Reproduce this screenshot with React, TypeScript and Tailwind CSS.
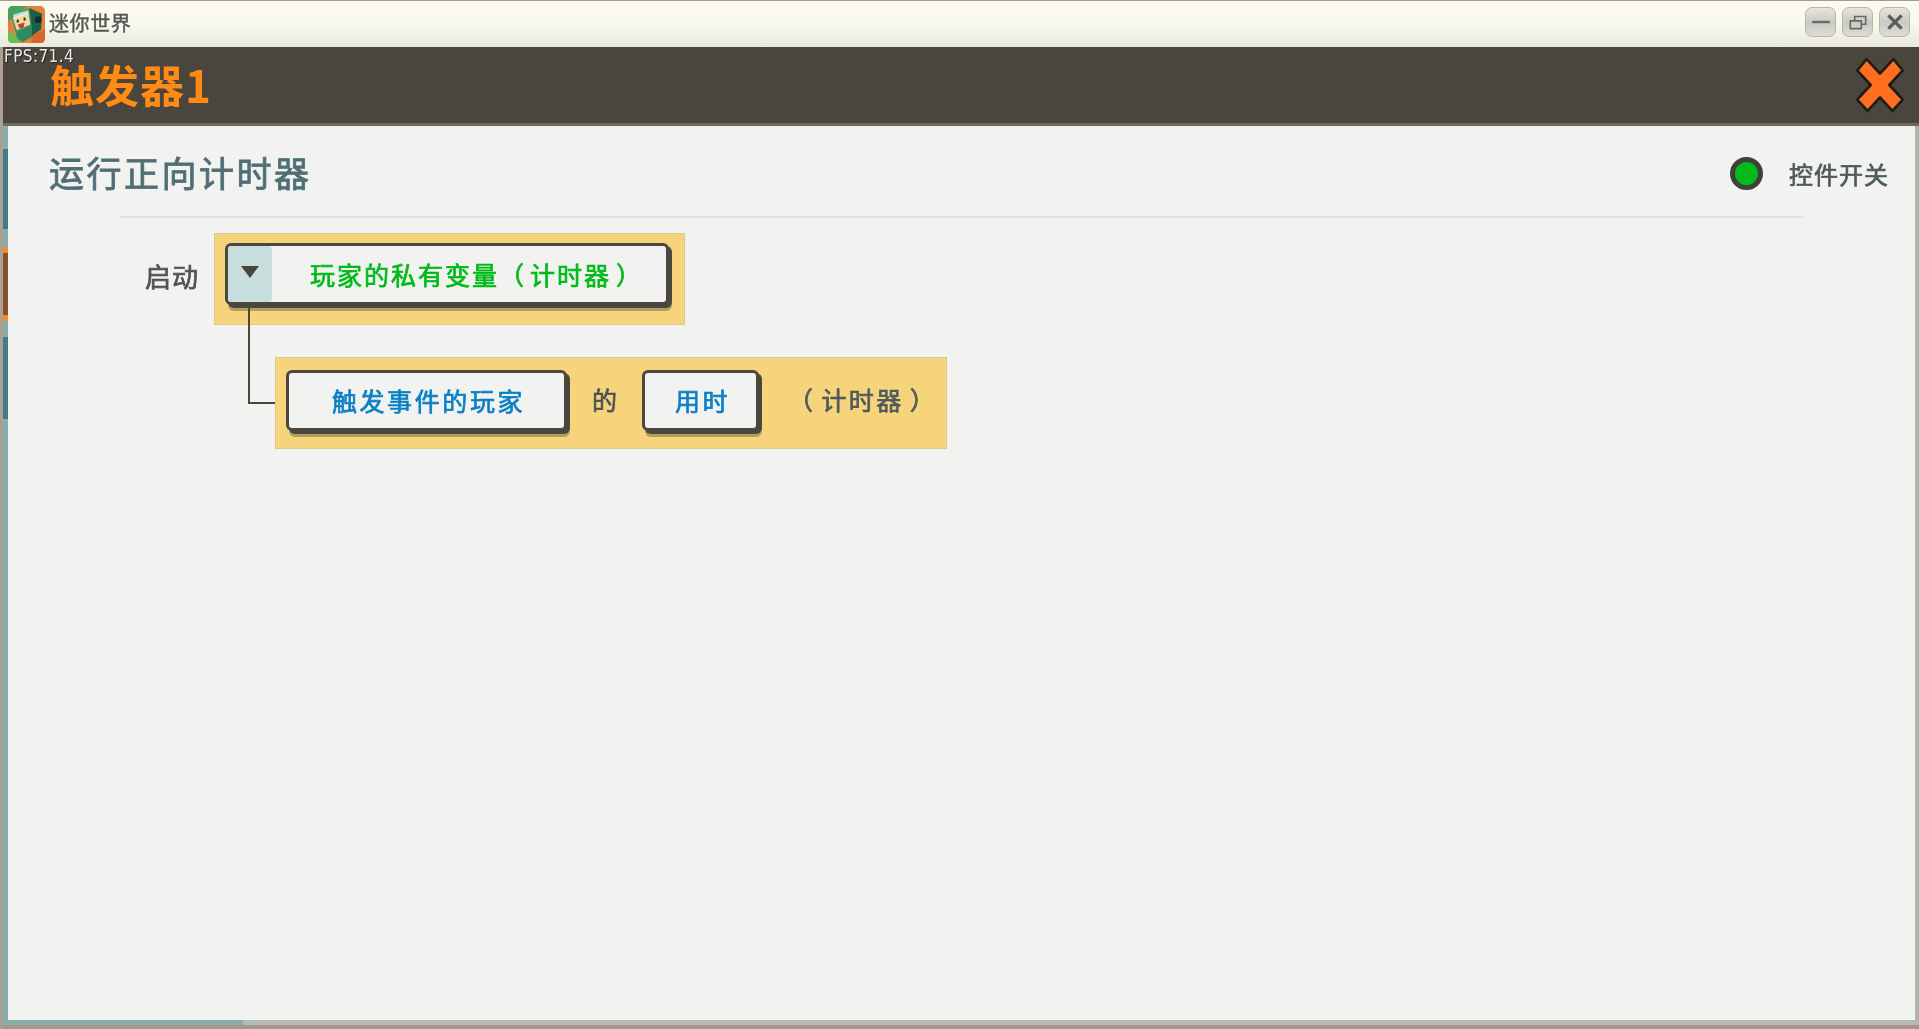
import { type ReactNode } from "react";

const cjk = "font-['Noto_Sans_CJK_SC','Noto_Sans',sans-serif]";

function GameLogo() {
  return (
    <svg viewBox="0 0 38 38" className="w-[37px] h-[37px] shrink-0">
      <rect x="0" y="0" width="38" height="38" rx="5" fill="#e5813a" />
      <path d="M0 5 Q0 0 5 0 H20 L0 16Z" fill="#49a05c" />
      <path d="M0 26 L14 32 L12 38 H4 Q0 38 0 33Z" fill="#6dbb54" />
      <path d="M24 30 L38 24 V33 Q38 38 33 38 H24Z" fill="#d9652c" />
      <path d="M3 9 L22 2 L24 20 L8 28Z" fill="#2f9a6c" />
      <path d="M22 2 L35 8 L34 24 L24 31 L24 20Z" fill="#186149" />
      <path d="M8 28 L24 20 L24 32 L15 37 L10 34Z" fill="#2b8a60" />
      <path d="M5 12 L21 7 L23 19 L9 25Z" fill="#f4d8a4" />
      <path d="M5 9 L21 4 L21 8 L6 13Z" fill="#ffffff" opacity="0.7" />
      <rect x="9" y="14" width="2" height="3" fill="#33241c" />
      <rect x="16" y="12" width="2" height="3" fill="#33241c" />
      <path d="M10 19 L17 17 L16 22 L12 23Z" fill="#b9452c" />
      <circle cx="31" cy="14" r="3.5" fill="#20282f" />
    </svg>
  );
}

function WindowButton({ children }: { children: ReactNode }) {
  return (
    <div className="w-[31px] h-[30px] rounded-[7px] border border-[#bcb5a6] bg-gradient-to-b from-[#e6e6de] via-[#c9cbc4] to-[#dcdcd2] flex items-center justify-center">
      <svg viewBox="0 0 20 20" className="w-[22px] h-[22px]" fill="none" stroke="#6a6a64">
        {children}
      </svg>
    </div>
  );
}

function Slot({
  text,
  color,
  className,
}: {
  text: string;
  color: string;
  className: string;
}) {
  return (
    <div
      className={`h-[61px] rounded-[6px] bg-[#f2f2f0] border-[3px] border-[#4b473f] shadow-[3px_3px_0_#4b473f,3px_6px_0_#b39c5c] flex items-center justify-center pl-[4px] text-[25px] tracking-[2.6px] [-webkit-text-stroke:0.7px] ${color} ${className}`}
    >
      {text}
    </div>
  );
}

export default function App() {
  return (
    <div className={`w-[1919px] h-[1029px] overflow-hidden flex flex-col bg-[#f2f2f0] blur-[0.4px] ${cjk}`}>
      {/* Window title bar */}
      <div className="h-[47px] shrink-0 border-t border-[#a89a8c] bg-gradient-to-b from-[#fafaf0] via-[#f8f8ec] to-[#e9e8dc] flex items-center pl-[8px] pr-[9px]">
        <GameLogo />
        <span className="ml-[4px] -mt-[3px] text-[20px] tracking-[0.6px] text-[#555553] [-webkit-text-stroke:0.4px]">迷你世界</span>
        <div className="ml-auto flex gap-[6px] -mt-[4px]">
          <WindowButton>
            <path d="M2 10 H18" strokeWidth="2.2" />
          </WindowButton>
          <WindowButton>
            <path d="M3 9 H13 V16 H3Z M7 9 V5 H17 V12 H13" strokeWidth="1.5" />
          </WindowButton>
          <WindowButton>
            <path d="M4 4 L16 16 M16 4 L4 16" strokeWidth="3" stroke="#5c5c58" />
          </WindowButton>
        </div>
      </div>

      <div className="flex-1 flex min-h-0 relative">
        {/* Left frame */}
        <div className="w-[3px] shrink-0 bg-[#ad9f92]" />

        <div className="flex-1 min-w-0 flex flex-col">
          {/* Header */}
          <div className="h-[79px] shrink-0 bg-[#4a463e] border-b-[3px] border-[#6b6860] flex items-center justify-between pl-[47px] pr-[15px]">
            <span className="-mt-[2px] text-[44px] font-bold leading-none tracking-[1px] text-[#ff8a14]">触发器1</span>
            <svg viewBox="0 0 46 54" className="w-[48px] h-[56px] mt-[-1px]">
              <path
                d="M10 2 L23 16 L36 2 L45 13 L32 27 L45 41 L35 52 L23 39 L11 52 L1 41 L14 27 L1 13Z"
                fill="#ff6d1f"
                stroke="#1f1c18"
                strokeWidth="2.5"
                strokeLinejoin="round"
              />
            </svg>
          </div>

          <div className="flex-1 min-h-0 flex">
            {/* Teal side rail */}
            <div className="w-[5px] shrink-0 bg-[#87aeac] flex flex-col">
              <div className="mt-[23px] h-[80px] bg-[#3f7b8b]" />
              <div className="mt-[18px] h-[6px] bg-[#f58a24]" />
              <div className="h-[62px] bg-[#85512c]" />
              <div className="h-[6px] bg-[#f58a24]" />
              <div className="mt-[16px] h-[82px] bg-[#3f7b8b]" />
            </div>

            {/* Content */}
            <div className="flex-1 min-w-0 flex flex-col">
              <div className="h-[92px] shrink-0 flex flex-col">
                <div className="flex-1 flex items-center justify-between pl-[41px] pr-[26px]">
                  <span className="mt-[3px] text-[35px] tracking-[2.5px] text-[#4f6f75] [-webkit-text-stroke:0.8px]">运行正向计时器</span>
                  <div className="mt-[5px] flex items-center gap-[26px]">
                    <div className="w-[33px] h-[33px] rounded-full bg-[#00bb18] border-[5px] border-[#3f3f3c]" />
                    <span className="text-[24px] tracking-[1px] text-[#4e5a5c] [-webkit-text-stroke:0.7px]">控件开关</span>
                  </div>
                </div>
                <div className="h-[2px] ml-[112px] mr-[111px] bg-[#dbe6e0]" />
              </div>

              {/* Rule blocks */}
              <div className="mt-[15px] flex flex-col">
                <div className="flex items-center pl-[137px]">
                  <span className="w-[69px] -mt-[8px] text-[26px] tracking-[1px] text-[#4e5254] [-webkit-text-stroke:0.7px]">启动</span>
                  <div className="w-[471px] h-[92px] bg-[#f6d47b] border border-[#ddc98f] flex items-start pl-[10px] pt-[9px]">
                    <div className="w-[444px] h-[62px] rounded-[6px] bg-[#f2f2f0] border-[3px] border-[#4b473f] shadow-[3px_3px_0_#4b473f,3px_6px_0_#b39c5c] flex items-center">
                      <div className="w-[44px] h-full rounded-[4px] bg-[#c8dedc] flex justify-center pt-[20px] shrink-0">
                        <svg viewBox="0 0 18 12" className="w-[18px] h-[12px]">
                          <path d="M0 0 H18 L9 12Z" fill="#4a463e" />
                        </svg>
                      </div>
                      <span className="ml-[38px] mt-[2px] text-[25px] tracking-[2px] text-[#00bb18] whitespace-nowrap [-webkit-text-stroke:0.7px]">
                        玩家的私有变量<span className="mr-[4px]">（</span>计时器<span className="ml-[5px]">）</span>
                      </span>
                    </div>
                  </div>
                </div>

                <div className="mt-[32px] ml-[267px] w-[672px] h-[92px] bg-[#f6d47b] border border-[#ddc98f] flex items-start pl-[10px] pt-[12px] relative">
                  {/* Connector from the dropdown down to the child block */}
                  <div className="absolute -left-[28px] -top-[52px] w-[27px] h-[98px] border-l-2 border-b-2 border-[#4b473f]" />
                  <Slot text="触发事件的玩家" color="text-[#0a80c6]" className="w-[281px]" />
                  <span className="ml-[25px] mt-[11px] text-[25px] text-[#4e5254] [-webkit-text-stroke:0.7px]">的</span>
                  <Slot text="用时" color="text-[#0a80c6]" className="ml-[25px] w-[117px]" />
                  <span className="ml-[29px] mt-[11px] text-[25px] tracking-[2.4px] text-[#4e5a5c] whitespace-nowrap [-webkit-text-stroke:0.7px]">
                    <span className="mr-[6px]">（</span>计时器<span className="ml-[6px]">）</span>
                  </span>
                </div>
              </div>

              <div className="flex-1" />
            </div>

            {/* Right frame */}
            <div className="w-[4px] shrink-0 bg-[#a9b8b0]" />
          </div>

          {/* Bottom progress strip */}
          <div className="h-[5px] shrink-0 flex bg-[#b2bab4]">
            <div className="w-[240px] bg-[#87aeac]" />
          </div>
          <div className="h-[4px] shrink-0 bg-[#a8968a]" />
        </div>

        {/* FPS overlay */}
        <span className="absolute left-[4px] top-[2px] text-[17px] tracking-[0.4px] leading-[14px] text-[#e8e8e8] font-['DejaVu_Sans_Condensed','DejaVu_Sans',sans-serif] [text-shadow:1px_1px_0_#222]">
          FPS:71.4
        </span>
      </div>
    </div>
  );
}
